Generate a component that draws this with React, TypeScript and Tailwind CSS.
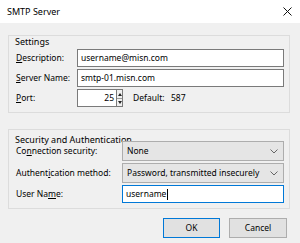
import React from "react";

const Chevron = () => (
  <svg width="8" height="5" viewBox="0 0 8 5" className="shrink-0">
    <path d="M0.5 0.5 L4 4 L7.5 0.5" fill="none" stroke="#666" strokeWidth="1" />
  </svg>
);

function Select({ value }: { value: string }) {
  return (
    <div className="flex h-[20px] w-[162px] items-center justify-between border border-[#adadad] bg-[#e5e5e5] pl-[4px] pr-[5px]">
      <span>{value}</span>
      <Chevron />
    </div>
  );
}

export default function App() {
  return (
    <div
      className="flex h-[243px] w-[300px] flex-col bg-[#f0f0f0] text-[8.5px] leading-[12px] text-black"
      style={{ fontFamily: '"Noto Sans", "Open Sans", sans-serif' }}
    >
      <div className="flex h-[23px] items-center justify-between bg-white pl-[7px] pr-[8px]">
        <span className="text-[9px]">SMTP Server</span>
        <svg width="9" height="9" viewBox="0 0 9 9">
          <path d="M0.5 0.5 L8.5 8.5 M8.5 0.5 L0.5 8.5" stroke="#111" strokeWidth="1" />
        </svg>
      </div>

      <div className="flex flex-col pl-[8px] pt-[12px]">
        {/* Settings */}
        <div className="flex h-[78px] w-[282px] flex-col border border-[#dcdcdc] pl-[7px] pr-[4px] pt-[1px]">
          <div className="-ml-[1px] h-[10px] text-[9px] leading-[10px]">Settings</div>
          <div className="mt-[2px] flex flex-col gap-[2px]">
            <div className="flex h-[18px] items-center">
              <span className="w-[61px]">
                <u className="underline-offset-1">D</u>escription:
              </span>
              <div className="flex h-[18px] w-[207px] items-center border border-[#7a7a7a] bg-white pl-[3px]">
                username@misn.com
              </div>
            </div>
            <div className="flex h-[18px] items-center">
              <span className="w-[61px]">
                <u className="underline-offset-1">S</u>erver Name:
              </span>
              <div className="flex h-[18px] w-[207px] items-center border border-[#7a7a7a] bg-white pl-[3px]">
                smtp-01.misn.com
              </div>
            </div>
            <div className="flex h-[18px] items-center">
              <span className="w-[61px]">
                <u className="underline-offset-1">P</u>ort:
              </span>
              <div className="flex h-[18px] w-[40px] items-center justify-end border border-[#7a7a7a] bg-white pr-[2px]">
                25
              </div>
              <div className="flex h-[18px] w-[6px] flex-col items-center justify-center gap-[2px] border border-l-0 border-[#7a7a7a] bg-[#f0f0f0]">
                <svg width="4" height="3" viewBox="0 0 4 3">
                  <path d="M0 3 L2 0 L4 3 Z" fill="#222" />
                </svg>
                <div className="h-px w-full bg-[#9a9a9a]" />
                <svg width="4" height="3" viewBox="0 0 4 3">
                  <path d="M0 0 L2 3 L4 0 Z" fill="#222" />
                </svg>
              </div>
              <span className="ml-[10px] w-[38px]">Default:</span>
              <span>587</span>
            </div>
          </div>
        </div>

        {/* Security */}
        <div className="mt-[16px] flex h-[80px] w-[282px] flex-col border border-[#dcdcdc] pl-[7px] pr-[4px] pt-[5px]">
          <div className="-ml-[1px] h-[10px] text-[9px] leading-[10px]">Security and Authentication</div>
          <div className="-mt-[4px] flex flex-col gap-[2px]">
            <div className="flex h-[20px] items-center">
              <span className="w-[106px]">
                Co<u className="underline-offset-1">n</u>nection security:
              </span>
              <Select value="None" />
            </div>
            <div className="flex h-[20px] items-center">
              <span className="w-[106px]">
                Authent<u className="underline-offset-1">i</u>cation method:
              </span>
              <Select value="Password, transmitted insecurely" />
            </div>
            <div className="flex h-[18px] items-center">
              <span className="w-[106px]">
                User Na<u className="underline-offset-1">m</u>e:
              </span>
              <div className="flex h-[18px] w-[162px] items-center border border-[#0078d7] bg-white pl-[3px]">
                username
                <span className="ml-px inline-block h-[11px] w-px bg-black" />
              </div>
            </div>
          </div>
        </div>
      </div>

      <div className="mt-[9px] flex justify-end gap-[9px] pr-[13px]">
        <div className="flex h-[20px] w-[57px] items-center justify-center border border-[#0078d7] bg-[#e1e1e1]">
          OK
        </div>
        <div className="flex h-[20px] w-[58px] items-center justify-center border border-[#adadad] bg-[#e1e1e1]">
          Cancel
        </div>
      </div>
    </div>
  );
}
